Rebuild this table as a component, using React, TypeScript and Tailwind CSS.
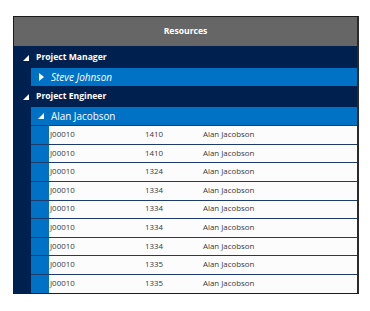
import React from "react";

const rows = [
  ["J00010", "1410", "Alan Jacobson"],
  ["J00010", "1410", "Alan Jacobson"],
  ["J00010", "1324", "Alan Jacobson"],
  ["J00010", "1334", "Alan Jacobson"],
  ["J00010", "1334", "Alan Jacobson"],
  ["J00010", "1334", "Alan Jacobson"],
  ["J00010", "1334", "Alan Jacobson"],
  ["J00010", "1335", "Alan Jacobson"],
  ["J00010", "1335", "Alan Jacobson"],
];

function Expanded({ className = "" }: { className?: string }) {
  return (
    <svg width="6" height="6" viewBox="0 0 6 6" className={className}>
      <polygon points="6,0 6,6 0,6" fill="white" />
    </svg>
  );
}

function Collapsed({ className = "" }: { className?: string }) {
  return (
    <svg width="5" height="8" viewBox="0 0 5 8" className={className}>
      <polygon points="0,0 5,4 0,8" fill="white" />
    </svg>
  );
}

export default function App() {
  return (
    <div className="w-[370px] h-[311px] bg-white pt-[16px] pl-[13px]" style={{ fontFamily: "'Open Sans', 'Noto Sans', sans-serif" }}>
      <div className="w-[346px] flex flex-col border border-[#1b1b1b] border-r-2 border-r-[#2a2a2a] bg-[#00214f]">
        <div className="h-[29px] bg-[#666666] flex items-center justify-center text-white font-bold text-[8.6px]">
          Resources
        </div>
        <div className="h-[22px] flex items-center pt-[1px] text-white font-bold text-[8.6px]">
          <div className="w-[22px] flex justify-center pl-[2px]"><Expanded /></div>
          <span>Project Manager</span>
        </div>
        <div className="ml-[17px] h-[18px] bg-[#0072c6] flex items-center text-white italic text-[10px]">
          <div className="w-[20px] flex justify-center"><Collapsed /></div>
          <span>Steve Johnson</span>
        </div>
        <div className="h-[21px] flex items-center text-white font-bold text-[8.6px]">
          <div className="w-[22px] flex justify-center pl-[2px]"><Expanded /></div>
          <span>Project Engineer</span>
        </div>
        <div className="ml-[17px] h-[18px] bg-[#0072c6] flex items-center text-white text-[9.9px]">
          <div className="w-[20px] flex justify-center"><Expanded /></div>
          <span>Alan Jacobson</span>
        </div>
        <div className="ml-[17px] flex flex-col">
          {rows.map((r, i) => (
            <div key={i} className="h-[18.65px] flex border-t border-[#1f3b6b]">
              <div className="w-[18px] bg-[#0072c6]" />
              <div className="flex-1 bg-[#fcfcfc] flex items-center text-[#3a3a3a] text-[7.9px]">
                <span className="w-[96px] pl-[1px]">{r[0]}</span>
                <span className="w-[58px]">{r[1]}</span>
                <span>{r[2]}</span>
              </div>
            </div>
          ))}
        </div>
      </div>
    </div>
  );
}
